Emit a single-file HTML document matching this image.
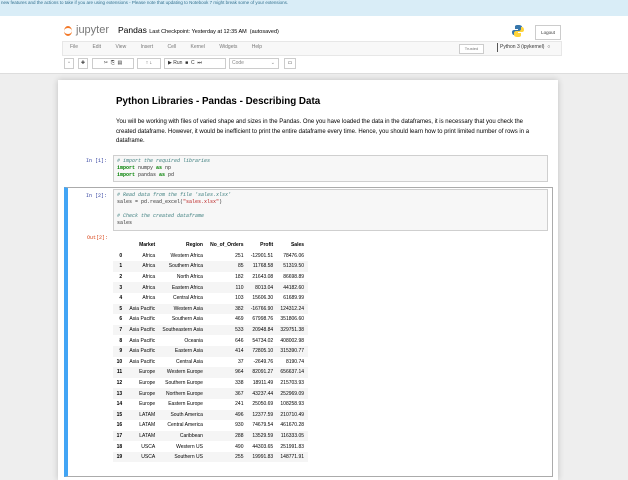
<!DOCTYPE html><html><head><style>
body{margin:0;width:628px;height:471px;overflow:hidden;background:#eee;font-family:"Liberation Sans",sans-serif;position:relative}
.a{position:absolute}
.mono{font-family:"Liberation Mono",monospace}
table{border-collapse:collapse;font-size:5px;color:#000}
td,th{padding:0 3.6px;height:10.6px;text-align:right;white-space:nowrap}
th{font-weight:bold}
tr:nth-child(odd) td,tr:nth-child(odd) th{background:#f5f5f5}
tr:first-child th{background:#fff}
.btn{position:absolute;top:58px;height:11px;border:1px solid #ccc;background:#fff;box-sizing:border-box;font-size:5px;text-align:center;line-height:9px;color:#333}
</style></head><body>
<div class="a" style="left:0;top:0;width:628px;height:16px;background:#d9edf7;font-size:4.5px;color:#31708f;line-height:6px;padding-left:1px">new features and the actions to take if you are using extensions - Please note that updating to Notebook 7 might break some of your extensions.</div>
<div class="a" style="left:0;top:16px;width:628px;height:57px;background:#fff;border-bottom:1px solid #ddd"></div>
<div class="a" style="left:64px;top:26px;width:8px;height:10px;border-top:2px solid #f37726;border-bottom:2px solid #f37726;border-radius:50%;box-sizing:border-box"></div>
<div class="a" style="left:76px;top:24px;font-size:11px;color:#777">jupyter</div>
<div class="a" style="left:118px;top:25px;font-size:8.5px;color:#000">Pandas <span style="font-size:5.5px">Last Checkpoint: Yesterday at 12:35 AM &nbsp;(autosaved)</span></div>
<svg class="a" style="left:512px;top:25px" width="12" height="12"><path d="M6 0C3 0 3 1 3 2v2h3v1H2C0 5 0 7 0 7c0 2 1 3 2 3h1V8c0-1 1-2 2-2h3c1 0 2-1 2-2V2C10 1 9 0 6 0z" fill="#3776ab"/><path d="M6 12c3 0 3-1 3-2V8H6V7h4c2 0 2-2 2-2 0-2-1-3-2-3H9v2c0 1-1 2-2 2H4c-1 0-2 1-2 2v2c0 1 1 2 4 2z" fill="#ffd43b"/></svg>
<div class="a" style="left:535px;top:25px;width:24px;height:13px;border:1px solid #ccc;font-size:4.5px;text-align:center;line-height:13px;color:#333">Logout</div>
<div class="a" style="left:62px;top:41px;width:500px;height:15px;background:#f8f8f8;border:1px solid #e7e7e7;box-sizing:border-box"></div>
<div class="a" style="left:70px;top:44px;font-size:5px;color:#777;word-spacing:13px">File Edit View Insert Cell Kernel Widgets Help</div>
<div class="a" style="left:459px;top:44px;width:23px;height:8px;border:1px solid #ccc;background:#fff;font-size:4px;color:#777;text-align:center;line-height:8px">Trusted</div>
<div class="a" style="left:497px;top:43px;height:9px;border-left:1px solid #555;padding-left:2px;font-size:5px;color:#333;line-height:9px">Python 3 (ipykernel) &nbsp;○</div>
<div class="btn" style="left:64px;width:10px">▫</div>
<div class="btn" style="left:78px;width:10px">✚</div>
<div class="btn" style="left:92px;width:42px">✂ &nbsp;⎘ &nbsp;▤</div>
<div class="btn" style="left:137px;width:24px">↑ ↓</div>
<div class="btn" style="left:164px;width:62px;text-align:left;padding-left:3px">▶ Run &nbsp;■ &nbsp;C &nbsp;⏭</div>
<div class="btn" style="left:229px;width:50px;text-align:left;padding-left:2px;color:#888">Code <span style="float:right;padding-right:3px">⌄</span></div>
<div class="btn" style="left:284px;width:12px">▭</div>
<div class="a" style="left:58px;top:80px;width:500px;height:400px;background:#fff;box-shadow:0 0 6px rgba(0,0,0,.2)"></div>
<div class="a" style="left:116px;top:96px;font-size:9.8px;font-weight:bold;color:#000">Python Libraries - Pandas - Describing Data</div>
<div class="a" style="left:116px;top:118px;width:428px;font-size:6px;line-height:9.6px;color:#000">You will be working with files of varied shape and sizes in the Pandas. One you have loaded the data in the dataframes, it is necessary that you check the created dataframe. However, it would be inefficient to print the entire dataframe every time. Hence, you should learn how to print limited number of rows in a dataframe.</div>
<div class="a mono" style="left:86px;top:158px;font-size:5px;color:#303f9f">In [1]:</div>
<div class="a mono" style="left:113px;top:155px;width:435px;height:27px;background:#f7f7f7;border:1px solid #cfcfcf;font-size:5px;line-height:7px;padding:2px 3px;box-sizing:border-box;white-space:pre;color:#333"><i style="color:#408080"># import the required libraries</i>
<b style="color:#008000">import</b> numpy <b style="color:#008000">as</b> np
<b style="color:#008000">import</b> pandas <b style="color:#008000">as</b> pd</div>
<div class="a" style="left:64px;top:187px;height:290px;border:1px solid #ababab;border-left:4px solid #42a5f5;width:489px;box-sizing:border-box"></div>
<div class="a mono" style="left:86px;top:193px;font-size:5px;color:#303f9f">In [2]:</div>
<div class="a mono" style="left:113px;top:189px;width:435px;height:42px;background:#f7f7f7;border:1px solid #cfcfcf;font-size:5px;line-height:7px;padding:2px 3px;box-sizing:border-box;white-space:pre;color:#333"><i style="color:#408080"># Read data from the file 'sales.xlsx'</i>
sales = pd.read_excel(<span style="color:#ba2121">"sales.xlsx"</span>)

<i style="color:#408080"># Check the created dataframe</i>
sales</div>
<div class="a mono" style="left:87px;top:235px;font-size:5px;color:#d84315">Out[2]:</div>
<table class="a" style="left:113px;top:240px">
<tr><th></th><th>Market</th><th>Region</th><th>No_of_Orders</th><th>Profit</th><th>Sales</th></tr>
<tr><th>0</th><td>Africa</td><td>Western Africa</td><td>251</td><td>-12901.51</td><td>78476.06</td></tr>
<tr><th>1</th><td>Africa</td><td>Southern Africa</td><td>85</td><td>11768.58</td><td>51319.50</td></tr>
<tr><th>2</th><td>Africa</td><td>North Africa</td><td>182</td><td>21643.08</td><td>86698.89</td></tr>
<tr><th>3</th><td>Africa</td><td>Eastern Africa</td><td>110</td><td>8013.04</td><td>44182.60</td></tr>
<tr><th>4</th><td>Africa</td><td>Central Africa</td><td>103</td><td>15606.30</td><td>61689.99</td></tr>
<tr><th>5</th><td>Asia Pacific</td><td>Western Asia</td><td>382</td><td>-16766.90</td><td>124312.24</td></tr>
<tr><th>6</th><td>Asia Pacific</td><td>Southern Asia</td><td>469</td><td>67998.76</td><td>351806.60</td></tr>
<tr><th>7</th><td>Asia Pacific</td><td>Southeastern Asia</td><td>533</td><td>20948.84</td><td>329751.38</td></tr>
<tr><th>8</th><td>Asia Pacific</td><td>Oceania</td><td>646</td><td>54734.02</td><td>408002.98</td></tr>
<tr><th>9</th><td>Asia Pacific</td><td>Eastern Asia</td><td>414</td><td>72805.10</td><td>315390.77</td></tr>
<tr><th>10</th><td>Asia Pacific</td><td>Central Asia</td><td>37</td><td>-2649.76</td><td>8190.74</td></tr>
<tr><th>11</th><td>Europe</td><td>Western Europe</td><td>964</td><td>82091.27</td><td>656637.14</td></tr>
<tr><th>12</th><td>Europe</td><td>Southern Europe</td><td>338</td><td>18911.49</td><td>215703.93</td></tr>
<tr><th>13</th><td>Europe</td><td>Northern Europe</td><td>367</td><td>43237.44</td><td>252969.09</td></tr>
<tr><th>14</th><td>Europe</td><td>Eastern Europe</td><td>241</td><td>25050.69</td><td>108258.93</td></tr>
<tr><th>15</th><td>LATAM</td><td>South America</td><td>496</td><td>12377.59</td><td>210710.49</td></tr>
<tr><th>16</th><td>LATAM</td><td>Central America</td><td>930</td><td>74679.54</td><td>461670.28</td></tr>
<tr><th>17</th><td>LATAM</td><td>Caribbean</td><td>288</td><td>13529.59</td><td>116333.05</td></tr>
<tr><th>18</th><td>USCA</td><td>Western US</td><td>490</td><td>44303.65</td><td>251991.83</td></tr>
<tr><th>19</th><td>USCA</td><td>Southern US</td><td>255</td><td>19991.83</td><td>148771.91</td></tr>
</table>
</body></html>
